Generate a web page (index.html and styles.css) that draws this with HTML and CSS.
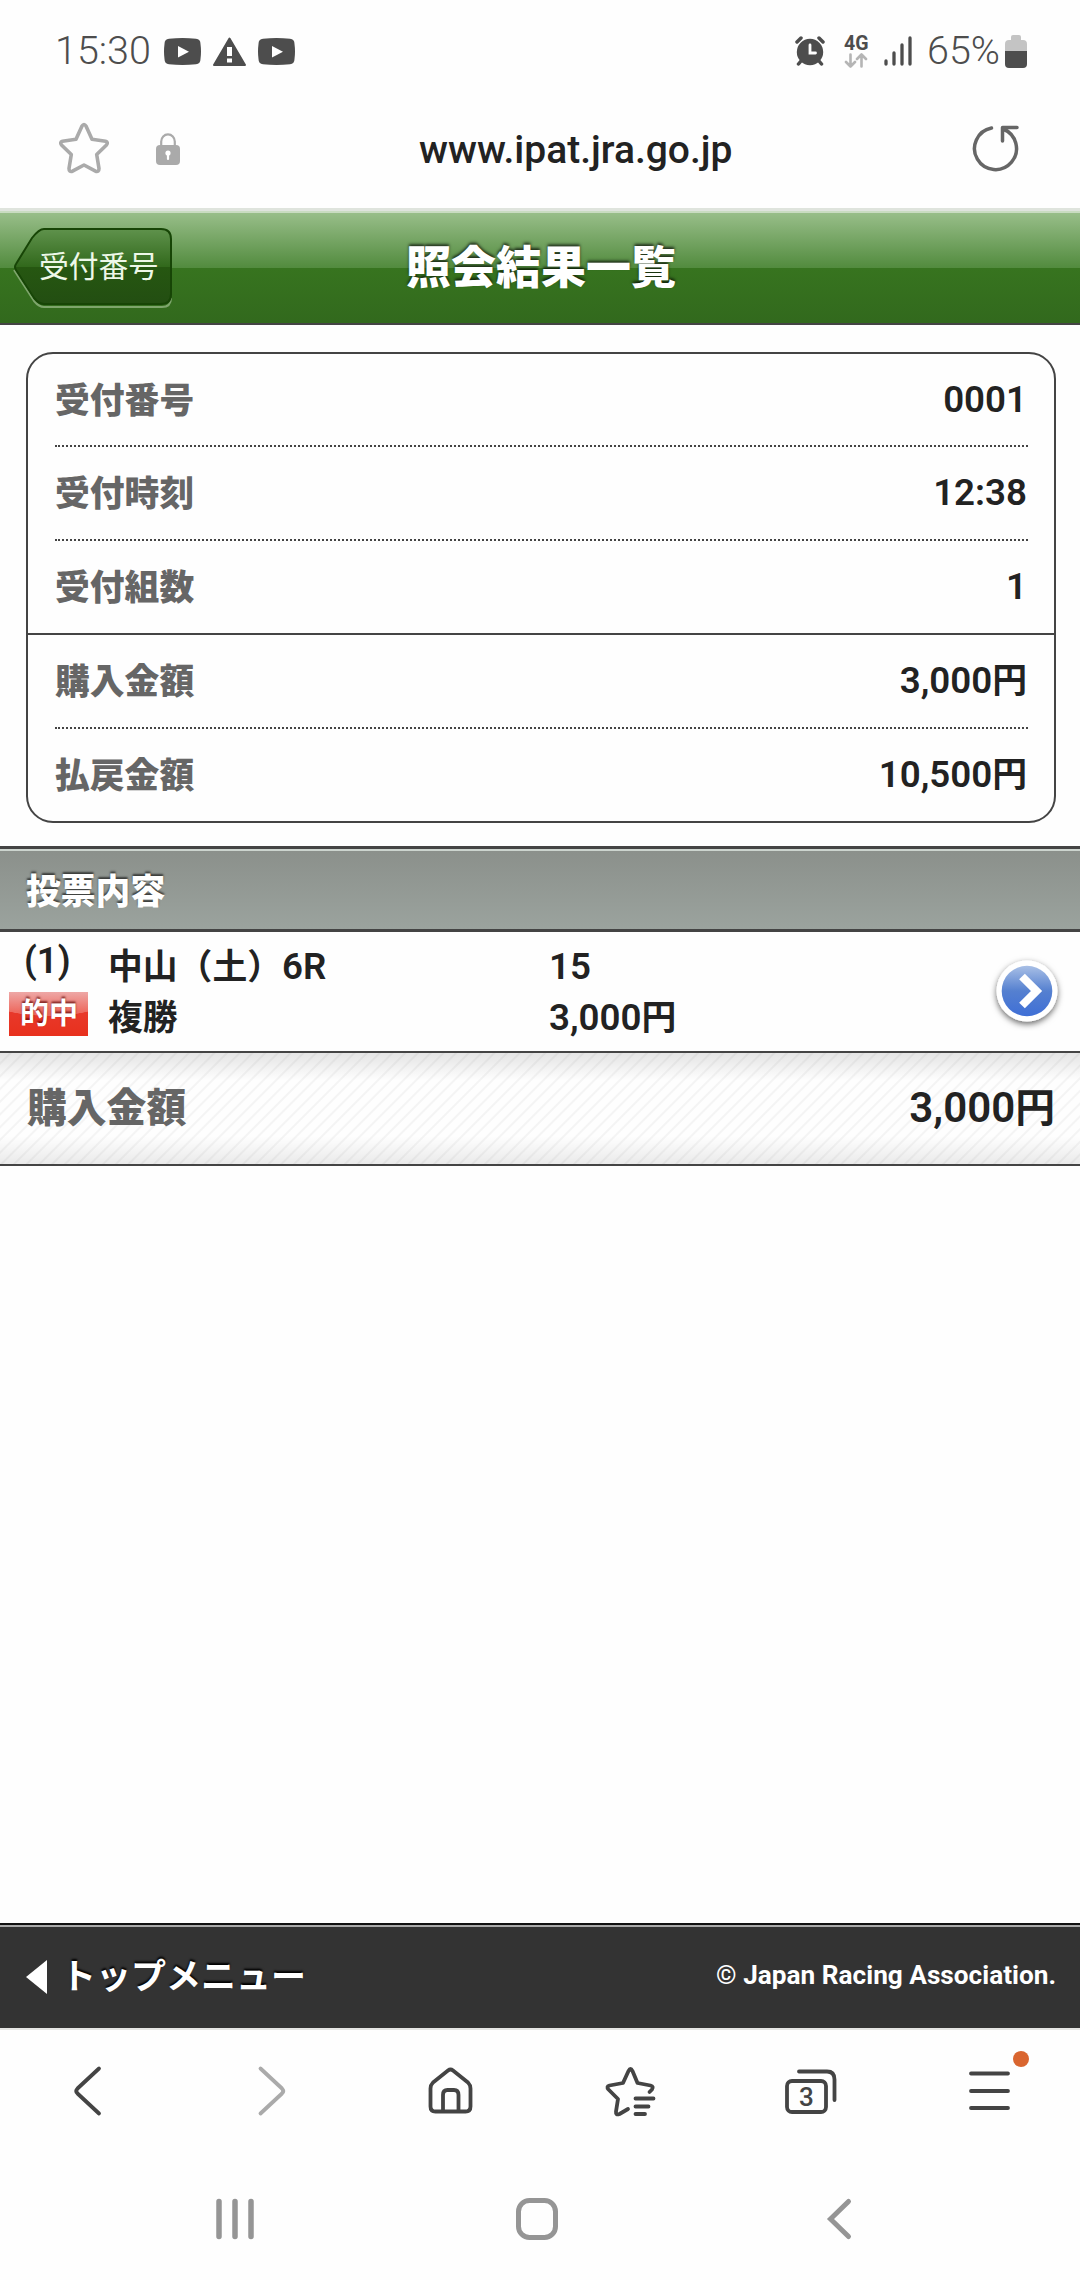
FILE: index.html
```html
<!DOCTYPE html>
<html lang="ja">
<head>
  <meta charset="UTF-8" />
  <meta name="viewport" content="width=device-width, initial-scale=1.0"/>
  <title>照会結果一覧</title>
  <link rel="stylesheet" href="styles.css">
</head>
<body>
  <div class="status-bar">
    <span class="clock">15:30</span>
    <svg class="icon-video" width="37" height="27" viewBox="0 0 37 27"><path fill="#4d4d4d" d="M5 .8Q18.500-.8 32 .8Q36.500 1.200 36.500 6Q37.500 13.500 36.500 21Q36.500 25.800 32 26.200Q18.500 27.800 5 26.200Q.5 25.800 .5 21Q-.5 13.500 .5 6Q.5 1.200 5 .8Z"/><path fill="#fff" d="M14 8l11 5.700-11 5.700z"/></svg>
    <svg class="icon-warn" width="33" height="29" viewBox="0 0 33 29"><path fill="#4d4d4d" stroke="#4d4d4d" stroke-width="2" stroke-linejoin="round" d="M16.500 1.500L32 28H1z"/><path fill="#fff" d="M14 10h5v9h-5zM14 21.500h5v4h-5z"/></svg>
    <svg class="icon-video" width="37" height="27" viewBox="0 0 37 27"><path fill="#4d4d4d" d="M5 .8Q18.500-.8 32 .8Q36.500 1.200 36.500 6Q37.500 13.500 36.500 21Q36.500 25.800 32 26.200Q18.500 27.800 5 26.200Q.5 25.800 .5 21Q-.5 13.500 .5 6Q.5 1.200 5 .8Z"/><path fill="#fff" d="M14 8l11 5.700-11 5.700z"/></svg>
    <div class="status-right">
      <svg class="icon-alarm" width="30" height="30" viewBox="0 0 30 30"><circle cx="15" cy="16" r="13.200" fill="#4d4d4d"/><path stroke="#4d4d4d" stroke-width="3.500" stroke-linecap="round" d="M2 6l4-4M28 6l-4-4M6 25l-2.500 3M24 25l2.500 3"/><path fill="none" stroke="#fff" stroke-width="2.800" stroke-linecap="round" d="M15 9v8h5.500"/></svg>
      <div class="network">
        <span>4G</span>
        <svg width="24" height="15" viewBox="0 0 24 15"><path fill="none" stroke="#b5b5b5" stroke-width="2.600" stroke-linecap="round" stroke-linejoin="round" d="M6.500 1.500v12M2 9l4.500 4.500L11 9M17.500 13.500v-12M13 6l4.500-4.500L22 6"/></svg>
      </div>
      <svg class="icon-signal" width="29" height="30" viewBox="0 0 29 30"><path stroke="#4d4d4d" stroke-width="3.300" stroke-linecap="round" d="M2 25v3M10 17v11M18 9v19M26 2v26"/></svg>
      <span class="percent">65%</span>
      <svg class="icon-battery" width="22" height="33" viewBox="0 0 22 33"><path fill="#c4c4c4" d="M6 5V2q0-2 2-2h6q2 0 2 2v3h2q4 0 4 4v8H0V9q0-4 4-4z"/><path fill="#4d4d4d" d="M0 16h22v13q0 4-4 4H4q-4 0-4-4z"/></svg>
    </div>
  </div>

  <div class="address-bar">
    <svg class="icon-star" width="52" height="52" viewBox="0 0 52 52"><path fill="none" stroke="#aaa" stroke-width="3.600" stroke-linejoin="round" d="M23.900 4.300Q26 .8 28.100 4.300L34 17.200L47.500 19.300Q50.600 20.300 48.500 23L38.700 32.500L41 46.500Q41 50.200 37.500 49.200L26 43L14.500 49.200Q11 50.200 11 46.500L13.300 32.500L3.500 23Q1.400 20.300 4.500 19.300L18 17.200Z"/></svg>
    <svg class="icon-lock" width="24" height="32" viewBox="0 0 24 32"><path fill="none" stroke="#aaa" stroke-width="2.200" d="M5.200 14V8.500a6.800 7.200 0 0 1 13.600 0V14"/><rect y="12" width="24" height="20" rx="4" fill="#aaa"/><circle cx="12" cy="20" r="2.600" fill="#fff"/><path stroke="#fff" stroke-width="2.200" stroke-linecap="round" d="M12 20v6"/></svg>
    <span class="url">www.ipat.jra.go.jp</span>
    <svg class="icon-reload" width="48" height="48" viewBox="0 0 48 48"><path fill="none" stroke="#666" stroke-width="3.500" stroke-linecap="round" stroke-linejoin="round" d="M19.500 3A21 21 0 1 0 31 4M45 2.500H30.500V16"/></svg>
  </div>

  <header class="page-header">
    <a class="back-button" href="#">
      <svg class="back-shape" width="162" height="84" viewBox="0 0 162 84">
        <defs>
          <linearGradient id="backFill" x1="0" y1="0" x2="0" y2="1">
            <stop offset="0" stop-color="#5f924c"/>
            <stop offset=".5" stop-color="#32691c"/>
            <stop offset=".51" stop-color="#265711"/>
            <stop offset="1" stop-color="#234e12"/>
          </linearGradient>
        </defs>
        <path fill="none" stroke="#7ea56c" stroke-width="2" d="M32 80Q27 80 22 74L2 43M32 80H150Q159 80 159 71"/>
        <path fill="url(#backFill)" stroke="#174506" stroke-width="2" d="M32 2H149Q159 2 159 12V67Q159 77 149 77H32Q27 77 22 71L4 43Q2 40 4 37L20 11Q27 2 32 2Z"/>
      </svg>
      <span class="back-text">受付番号</span>
    </a>
    <h1>照会結果一覧</h1>
  </header>

  <main>
    <dl class="summary">
      <div class="summary-row"><dt>受付番号</dt><dd>0001</dd></div>
      <div class="summary-row"><dt>受付時刻</dt><dd>12:38</dd></div>
      <div class="summary-row section-end"><dt>受付組数</dt><dd>1</dd></div>
      <div class="summary-row"><dt>購入金額</dt><dd>3,000<span class="yen">円</span></dd></div>
      <div class="summary-row"><dt>払戻金額</dt><dd>10,500<span class="yen">円</span></dd></div>
    </dl>

    <h2 class="section-title">投票内容</h2>

    <div class="bet">
      <div class="bet-no">
        <span>(1)</span>
        <span class="hit">的中</span>
      </div>
      <div class="bet-race">
        <div><span class="ja">中山（土）</span>6R</div>
        <div><span class="ja">複勝</span></div>
      </div>
      <div class="bet-amount">
        <div>15</div>
        <div>3,000<span class="yen">円</span></div>
      </div>
      <svg class="bet-arrow" width="76" height="76" viewBox="0 0 76 76">
        <defs>
          <linearGradient id="arrowFill" x1="0" y1="0" x2="0" y2="1">
            <stop offset="0" stop-color="#a9c0e6"/>
            <stop offset=".5" stop-color="#5580d0"/>
            <stop offset="1" stop-color="#3f6fd6"/>
          </linearGradient>
          <filter id="arrowShadow" x="-20%" y="-20%" width="140%" height="140%">
            <feDropShadow dx="0" dy="2.500" stdDeviation="3" flood-color="#000" flood-opacity=".6"/>
          </filter>
        </defs>
        <circle cx="38" cy="36" r="30.500" fill="#fff" filter="url(#arrowShadow)"/>
        <circle cx="38" cy="36" r="25.300" fill="url(#arrowFill)"/>
        <path fill="none" stroke="#fff" stroke-width="8" d="M33 21.500L47.500 36L33 50.500"/>
      </svg>
    </div>

    <div class="total">
      <span class="total-label">購入金額</span>
      <span class="total-value">3,000<span class="yen">円</span></span>
    </div>
  </main>

  <footer class="page-footer">
    <a class="top-menu" href="#">
      <svg width="22" height="34" viewBox="0 0 22 34"><path fill="#fff" d="M21 0v34L0 17z"/></svg>
      <span>トップメニュー</span>
    </a>
    <small>© Japan Racing Association.</small>
  </footer>

  <nav class="browser-nav">
    <svg width="60" height="60" viewBox="0 0 60 60"><path class="line" d="M39 7.500L17.500 27.500Q15 30 17.500 32.500L39 52.500"/></svg>
    <svg width="60" height="60" viewBox="0 0 60 60"><path class="line pale" d="M20.500 7.500L42 27.500Q44.500 30 42 32.500L20.500 52.500"/></svg>
    <svg width="60" height="60" viewBox="0 0 60 60"><path class="line" d="M28 9.500Q30.500 7.500 33 9.500L48 21.500Q50.500 24 50.500 27.500V45.500Q50.500 50.500 45.500 50.500H15.500Q10.500 50.500 10.500 45.500V27.500Q10.500 24 13 21.500ZM23 50.500V34Q23 29 27.500 29H34Q38.500 29 38.500 34V50.500"/></svg>
    <svg width="60" height="60" viewBox="0 0 60 60"><path class="line" d="M49.500 31L52 28.500Q54 25.500 50.500 24.500L37.500 22L32.500 10Q30.500 6 28.500 10L23 22L9.500 24.500Q6 25.500 8.500 28.500L18 38L16 50.500Q15.500 54.500 19.500 53L28 48M35.500 37.500H53.500M35.500 45.500H48.500M35.500 53H45"/></svg>
    <svg width="60" height="60" viewBox="0 0 60 60"><rect class="line" x="7" y="20" width="39" height="31" rx="5"/><path class="line" d="M19 10.500H47Q54.500 10.500 54.500 18.500V39"/><text class="tab-count" x="26.500" y="44.500" text-anchor="middle">3</text></svg>
    <div class="menu">
      <svg width="60" height="60" viewBox="0 0 60 60"><path class="line" d="M11 12.500H48M11 30H48M11 47H48"/></svg>
      <i class="menu-badge"></i>
    </div>
  </nav>

  <div class="system-nav">
    <svg width="44" height="44" viewBox="0 0 44 44"><path stroke="#959595" stroke-width="5.500" stroke-linecap="round" d="M6 4.500V39.500M22 4.500V39.500M38 4.500V39.500"/></svg>
    <svg width="44" height="44" viewBox="0 0 44 44"><rect x="3.500" y="3.500" width="37" height="37" rx="11" fill="none" stroke="#959595" stroke-width="5"/></svg>
    <svg width="44" height="44" viewBox="0 0 44 44"><path fill="none" stroke="#959595" stroke-width="5" stroke-linecap="round" d="M31.500 4.500L13.500 22L31.500 39.500"/></svg>
  </div>
</body>
</html>
```

FILE: styles.css
```css
* {
  box-sizing: border-box;
}
body {
  margin: 0;
  width: 1080px;
  height: 2280px;
  display: flex;
  flex-direction: column;
  overflow: hidden;
  background: #fefefe;
  color: #222;
  font-family: Roboto, "Noto Sans CJK JP", sans-serif;
}
svg {
  display: block;
  flex: none;
}
a {
  color: inherit;
  text-decoration: none;
}

/* status bar */
.status-bar {
  display: flex;
  align-items: center;
  height: 102px;
  padding: 0 53px 0 55px;
  color: #4d4d4d;
  font-size: 39.500px;
  font-weight: 350;
  line-height: 46px;
}
.clock {
  width: 109px;
}
.icon-warn {
  margin: 0 12px;
}
.status-right {
  display: flex;
  align-items: center;
  margin-left: auto;
}
.network {
  width: 26px;
  margin: 0 14px 0 19px;
  font-size: 19.500px;
  font-weight: 700;
  line-height: 18px;
}
.network span {
  display: block;
}
.percent {
  margin: 0 5px 0 14px;
}

/* address bar */
.address-bar {
  display: flex;
  align-items: center;
  height: 106px;
  padding: 0 60px 12px 58px;
}
.icon-star {
  margin-top: -2px;
}
.icon-lock {
  margin-left: 46px;
}
.url {
  margin: 2px 0 0 239px;
  font-size: 39px;
  font-weight: 500;
  line-height: 44px;
}
.icon-reload {
  margin-left: auto;
}

/* page header */
.page-header {
  display: grid;
  grid-template-columns: 1fr auto 1fr;
  align-items: center;
  height: 117px;
  border-bottom: 2px solid #444;
  background: linear-gradient(#dfe4dd 0 3px, #c9dcc1 3px 5px, #98be89 5px, #528b3e 60px, #37741f 60px, #32691d);
}
.back-button {
  display: grid;
  align-items: center;
  width: 162px;
  margin: 6px 0 0 12px;
}
.back-shape,
.back-text {
  grid-area: 1 / 1;
}
.back-text {
  padding: 0 0 3px 27px;
  color: #eef8e8;
  font-size: 29.800px;
  line-height: 40px;
}
.page-header h1 {
  margin: 7px 0 0 2px;
  color: #fff;
  font-size: 45px;
  font-weight: 900;
  line-height: 60px;
  text-shadow: 0 -2px 3px rgba(0, 0, 0, 0.7);
}

/* receipt summary */
.summary {
  margin: 27px 24px 23px 26px;
  border: 2px solid #444;
  border-radius: 27px;
}
.summary-row {
  display: flex;
  align-items: center;
  justify-content: space-between;
  height: 94px;
  margin: 0 26px 0 27px;
  border-bottom: 2px dotted #444;
}
.summary-row:first-child {
  height: 93px;
}
.summary-row.section-end {
  margin: 0;
  padding: 0 26px 0 27px;
  border-bottom-style: solid;
}
.summary-row:last-child {
  height: 92px;
  border-bottom: 0;
}
.summary dt {
  padding-bottom: 4px;
  color: #666;
  font-size: 34.800px;
  font-weight: 900;
}
.summary dd {
  margin: 0;
  padding: 0 1px 1px 0;
  font-size: 36.700px;
  font-weight: 600;
}
.yen,
.ja {
  font-size: 34.800px;
  font-weight: 700;
}
.summary .yen {
  line-height: 40px;
}

/* bet list */
.section-title {
  margin: 0;
  height: 86px;
  padding: 5px 26px 0;
  border-top: 3px solid #444;
  border-bottom: 3px solid #444;
  background: linear-gradient(#ccd4ce 0 2px, #8b908b 2px, #9ba39e);
  color: #fff;
  font-size: 34.800px;
  font-weight: 900;
  line-height: 76px;
  text-shadow: 0 -2px 2px rgba(0, 0, 0, 0.6);
}
.bet {
  display: flex;
  height: 121px;
  border-bottom: 2px solid #444;
  font-size: 36.700px;
  font-weight: 600;
  line-height: 51px;
}
.bet-no {
  width: 108px;
  padding: 5px 0 0 9px;
  line-height: 48px;
}
.bet-no span {
  display: block;
  padding-left: 15px;
}
.bet-no .hit {
  width: 79px;
  height: 44px;
  margin-top: 7px;
  padding-left: 11px;
  background: radial-gradient(ellipse 70px 24px at 50% 0, rgba(255, 255, 255, 0.250) 98%, transparent), linear-gradient(#e88a88, #e8392b 45%, #e8301d);
  color: #fff;
  font-size: 29px;
  font-weight: 700;
  line-height: 44px;
  text-shadow: 0 -2px 2px rgba(90, 0, 0, 0.7);
}
.bet-race,
.bet-amount {
  padding-top: 9px;
}
.bet-race div,
.bet-amount div {
  height: 51px;
}
.bet-race {
  width: 441px;
}
.bet-arrow {
  margin: 23px 15px 0 auto;
}
.total {
  display: flex;
  align-items: center;
  justify-content: space-between;
  height: 113px;
  padding: 0 25px 8px 27px;
  border-bottom: 2px solid #444;
  background:
    linear-gradient(rgba(0, 0, 0, 0.100), transparent 25%, transparent 75%, rgba(0, 0, 0, 0.080)),
    repeating-linear-gradient(135deg, #fefefe 0 6px, #f4f4f4 7px 8px, #fefefe 9px);
}
.total-label {
  color: #666;
  font-size: 39.800px;
  font-weight: 900;
}
.total-value {
  font-size: 42px;
  font-weight: 600;
}
.total .yen {
  font-size: 39.800px;
}

/* page footer */
.page-footer {
  display: flex;
  align-items: center;
  justify-content: space-between;
  height: 107px;
  margin-top: auto;
  padding: 0 24px 0 26px;
  border-top: 2px solid #111;
  border-bottom: 2px solid #e6e6e4;
  background: linear-gradient(#aaa 0 2px, #333 2px);
  color: #fff;
}
.top-menu {
  display: flex;
  align-items: center;
  gap: 13px;
  font-size: 35px;
  font-weight: 700;
  line-height: 50px;
  text-shadow: 0 -2px 2px #000;
}
.top-menu span {
  padding-top: 2px;
}
.page-footer small {
  padding-bottom: 3px;
  font-size: 26.200px;
  font-weight: 700;
}

/* browser toolbar */
.browser-nav {
  display: flex;
  justify-content: space-between;
  height: 125px;
  padding: 31px 60px 0;
}
.line {
  fill: none;
  stroke: #444;
  stroke-width: 3.800;
  stroke-linecap: round;
  stroke-linejoin: round;
}
.pale {
  stroke: #aaa;
}
.tab-count {
  fill: #444;
  font-size: 26px;
  font-weight: 500;
}
.menu {
  position: relative;
}
.menu-badge {
  position: absolute;
  top: -10px;
  right: -9px;
  width: 16px;
  height: 16px;
  border-radius: 50%;
  background: #d9652f;
}
.system-nav {
  display: flex;
  justify-content: space-between;
  height: 125px;
  padding: 42px 219px 0 213px;
}
```
